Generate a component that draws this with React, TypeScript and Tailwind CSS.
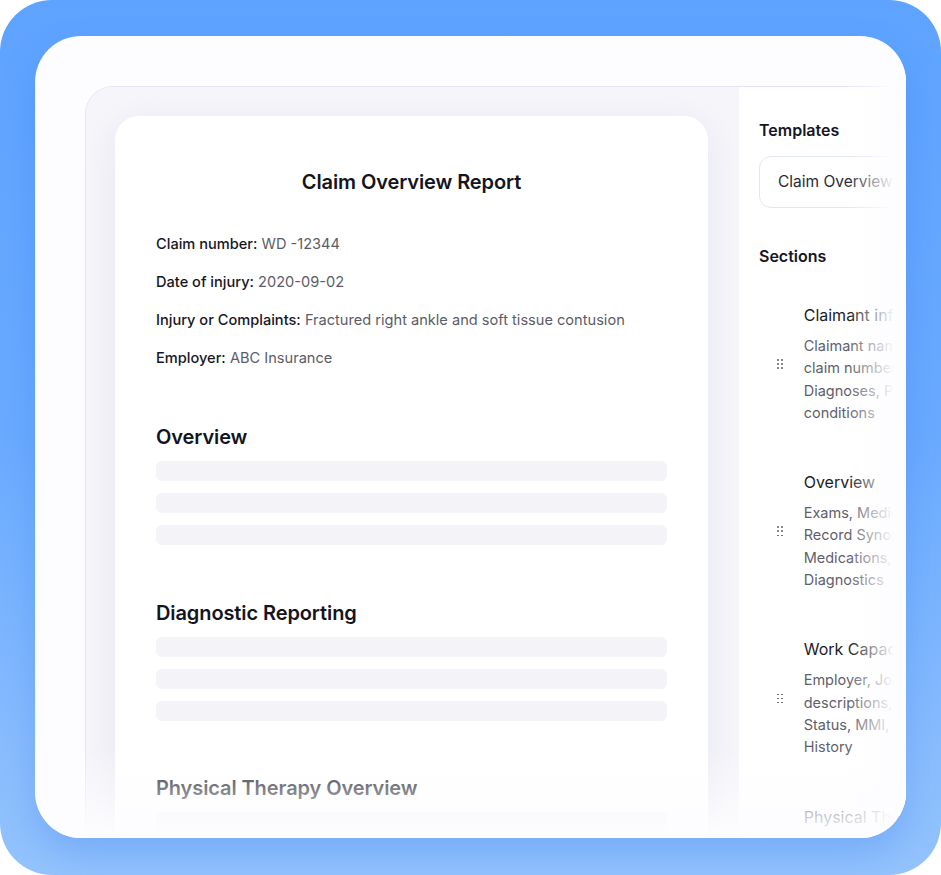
import * as React from 'react';

const fields = [
  { label: 'Claim number:', value: 'WD -12344' },
  { label: 'Date of injury:', value: '2020-09-02' },
  { label: 'Injury or Complaints:', value: 'Fractured right ankle and soft tissue contusion' },
  { label: 'Employer:', value: 'ABC Insurance' },
];

const sections = [
  {
    title: 'Claimant information',
    lines: ['Claimant name, DOB,', 'claim number, DOI,', 'Diagnoses, Prior', 'conditions'],
  },
  {
    title: 'Overview',
    lines: ['Exams, Medical', 'Record Synopsis,', 'Medications,', 'Diagnostics'],
  },
  {
    title: 'Work Capacity',
    lines: ['Employer, Job', 'descriptions, Work', 'Status, MMI, Work', 'History'],
  },
  {
    title: 'Physical Therapy',
    lines: ['Visits, Progress', 'Notes, Goals'],
  },
];

function Grip() {
  return (
    <div className="grid grid-cols-2 gap-x-[2.5px] gap-y-[2.5px]">
      {Array.from({ length: 6 }).map((_, i) => (
        <span key={i} className="block w-[1.6px] h-[1.6px] rounded-full bg-[#5f5f6c]" />
      ))}
    </div>
  );
}

function SkeletonBars() {
  return (
    <div className="flex flex-col gap-3">
      <div className="h-5 w-[511px] rounded-md bg-[#f3f3f8]" />
      <div className="h-5 w-[511px] rounded-md bg-[#f3f3f8]" />
      <div className="h-5 w-[511px] rounded-md bg-[#f3f3f8]" />
    </div>
  );
}

export default function App() {
  return (
    <div
      className="w-[941px] h-[875px] bg-white"
      style={{ fontFamily: 'Inter, "Noto Sans", sans-serif' }}
    >
      {/* Blue frame */}
      <div className="w-[941px] h-[875px] rounded-[52px] bg-linear-to-b from-[#5ea3ff] via-[#6aabff] to-[#95c4fd] pt-[36px] pl-[35px] pr-[35px] pb-[37px]">
        {/* White panel */}
        <div className="relative w-full h-full overflow-hidden rounded-[46px] bg-[#fdfdff] pt-[50px] pl-[50px] shadow-[0_18px_36px_rgba(40,110,230,0.25)]">
          {/* App window */}
          <div className="flex w-[900px] h-[800px] rounded-tl-[28px] border-t border-l border-[#e3e5f5] overflow-hidden">
            {/* Document area */}
            <div className="w-[653px] shrink-0 bg-[#f5f5fa] pt-[29px] pl-[29px]">
              <div className="w-[593px] h-[760px] rounded-[24px] bg-white shadow-[0_8px_36px_rgba(40,50,100,0.07)] pt-[52px] px-[41px]">
                <h1 className="text-center text-[20px] leading-[28px] font-semibold text-[#14141f] tracking-[-0.1px]">
                  Claim Overview Report
                </h1>

                <div className="mt-[37px] flex flex-col gap-4">
                  {fields.map((f) => (
                    <p key={f.label} className="text-[14.6px] leading-[22px] text-[#5c5c68]">
                      <span className="font-medium text-[#16161f]">{f.label}</span> {f.value}
                    </p>
                  ))}
                </div>

                <h2 className="mt-[54px] text-[20px] leading-[28px] font-semibold text-[#14141f] tracking-[-0.1px]">
                  Overview
                </h2>
                <div className="mt-[10px]">
                  <SkeletonBars />
                </div>

                <h2 className="mt-[54px] text-[20px] leading-[28px] font-semibold text-[#14141f] tracking-[-0.1px]">
                  Diagnostic Reporting
                </h2>
                <div className="mt-[10px]">
                  <SkeletonBars />
                </div>

                <h2 className="mt-[53px] text-[20px] leading-[28px] font-semibold text-[#14141f] tracking-[-0.1px]">
                  Physical Therapy Overview
                </h2>
                <div className="mt-[10px]">
                  <SkeletonBars />
                </div>
              </div>
            </div>

            {/* Right settings panel */}
            <div className="flex-1 bg-white pt-[31px] pl-[20px]">
              <h3 className="text-[16px] leading-[24px] font-semibold text-[#16161f]">Templates</h3>
              <div className="mt-[14px] h-[52px] w-[230px] rounded-[12px] border border-[#e3e6f5] flex items-center pl-[18px]">
                <span className="text-[15.5px] text-[#2a2a35] whitespace-nowrap">Claim Overview Report</span>
              </div>

              <h3 className="mt-[36px] text-[16px] leading-[24px] font-semibold text-[#16161f]">Sections</h3>

              <div className="mt-[36px] flex flex-col gap-[47px]">
                {sections.map((s) => (
                  <div key={s.title} className="flex items-center pl-[18px] gap-[21px]">
                    <Grip />
                    <div className="whitespace-nowrap">
                      <p className="text-[16px] leading-[22px] text-[#1c1c26]">{s.title}</p>
                      <div className="mt-[9px] text-[14.5px] leading-[22.3px] text-[#5f5f6b]">
                        {s.lines.map((l) => (
                          <p key={l}>{l}</p>
                        ))}
                      </div>
                    </div>
                  </div>
                ))}
              </div>
            </div>
          </div>

          {/* Right fade */}
          <div className="pointer-events-none absolute top-0 right-0 h-full w-[58px] bg-linear-to-r from-[#fdfdff]/0 to-[#fdfdff] to-80%" />
          {/* Bottom fade */}
          <div className="pointer-events-none absolute bottom-0 left-0 w-full h-[90px] bg-linear-to-b from-[#fdfdff]/0 via-[#fdfdff]/50 to-[#fdfdff]" />
        </div>
      </div>
    </div>
  );
}
